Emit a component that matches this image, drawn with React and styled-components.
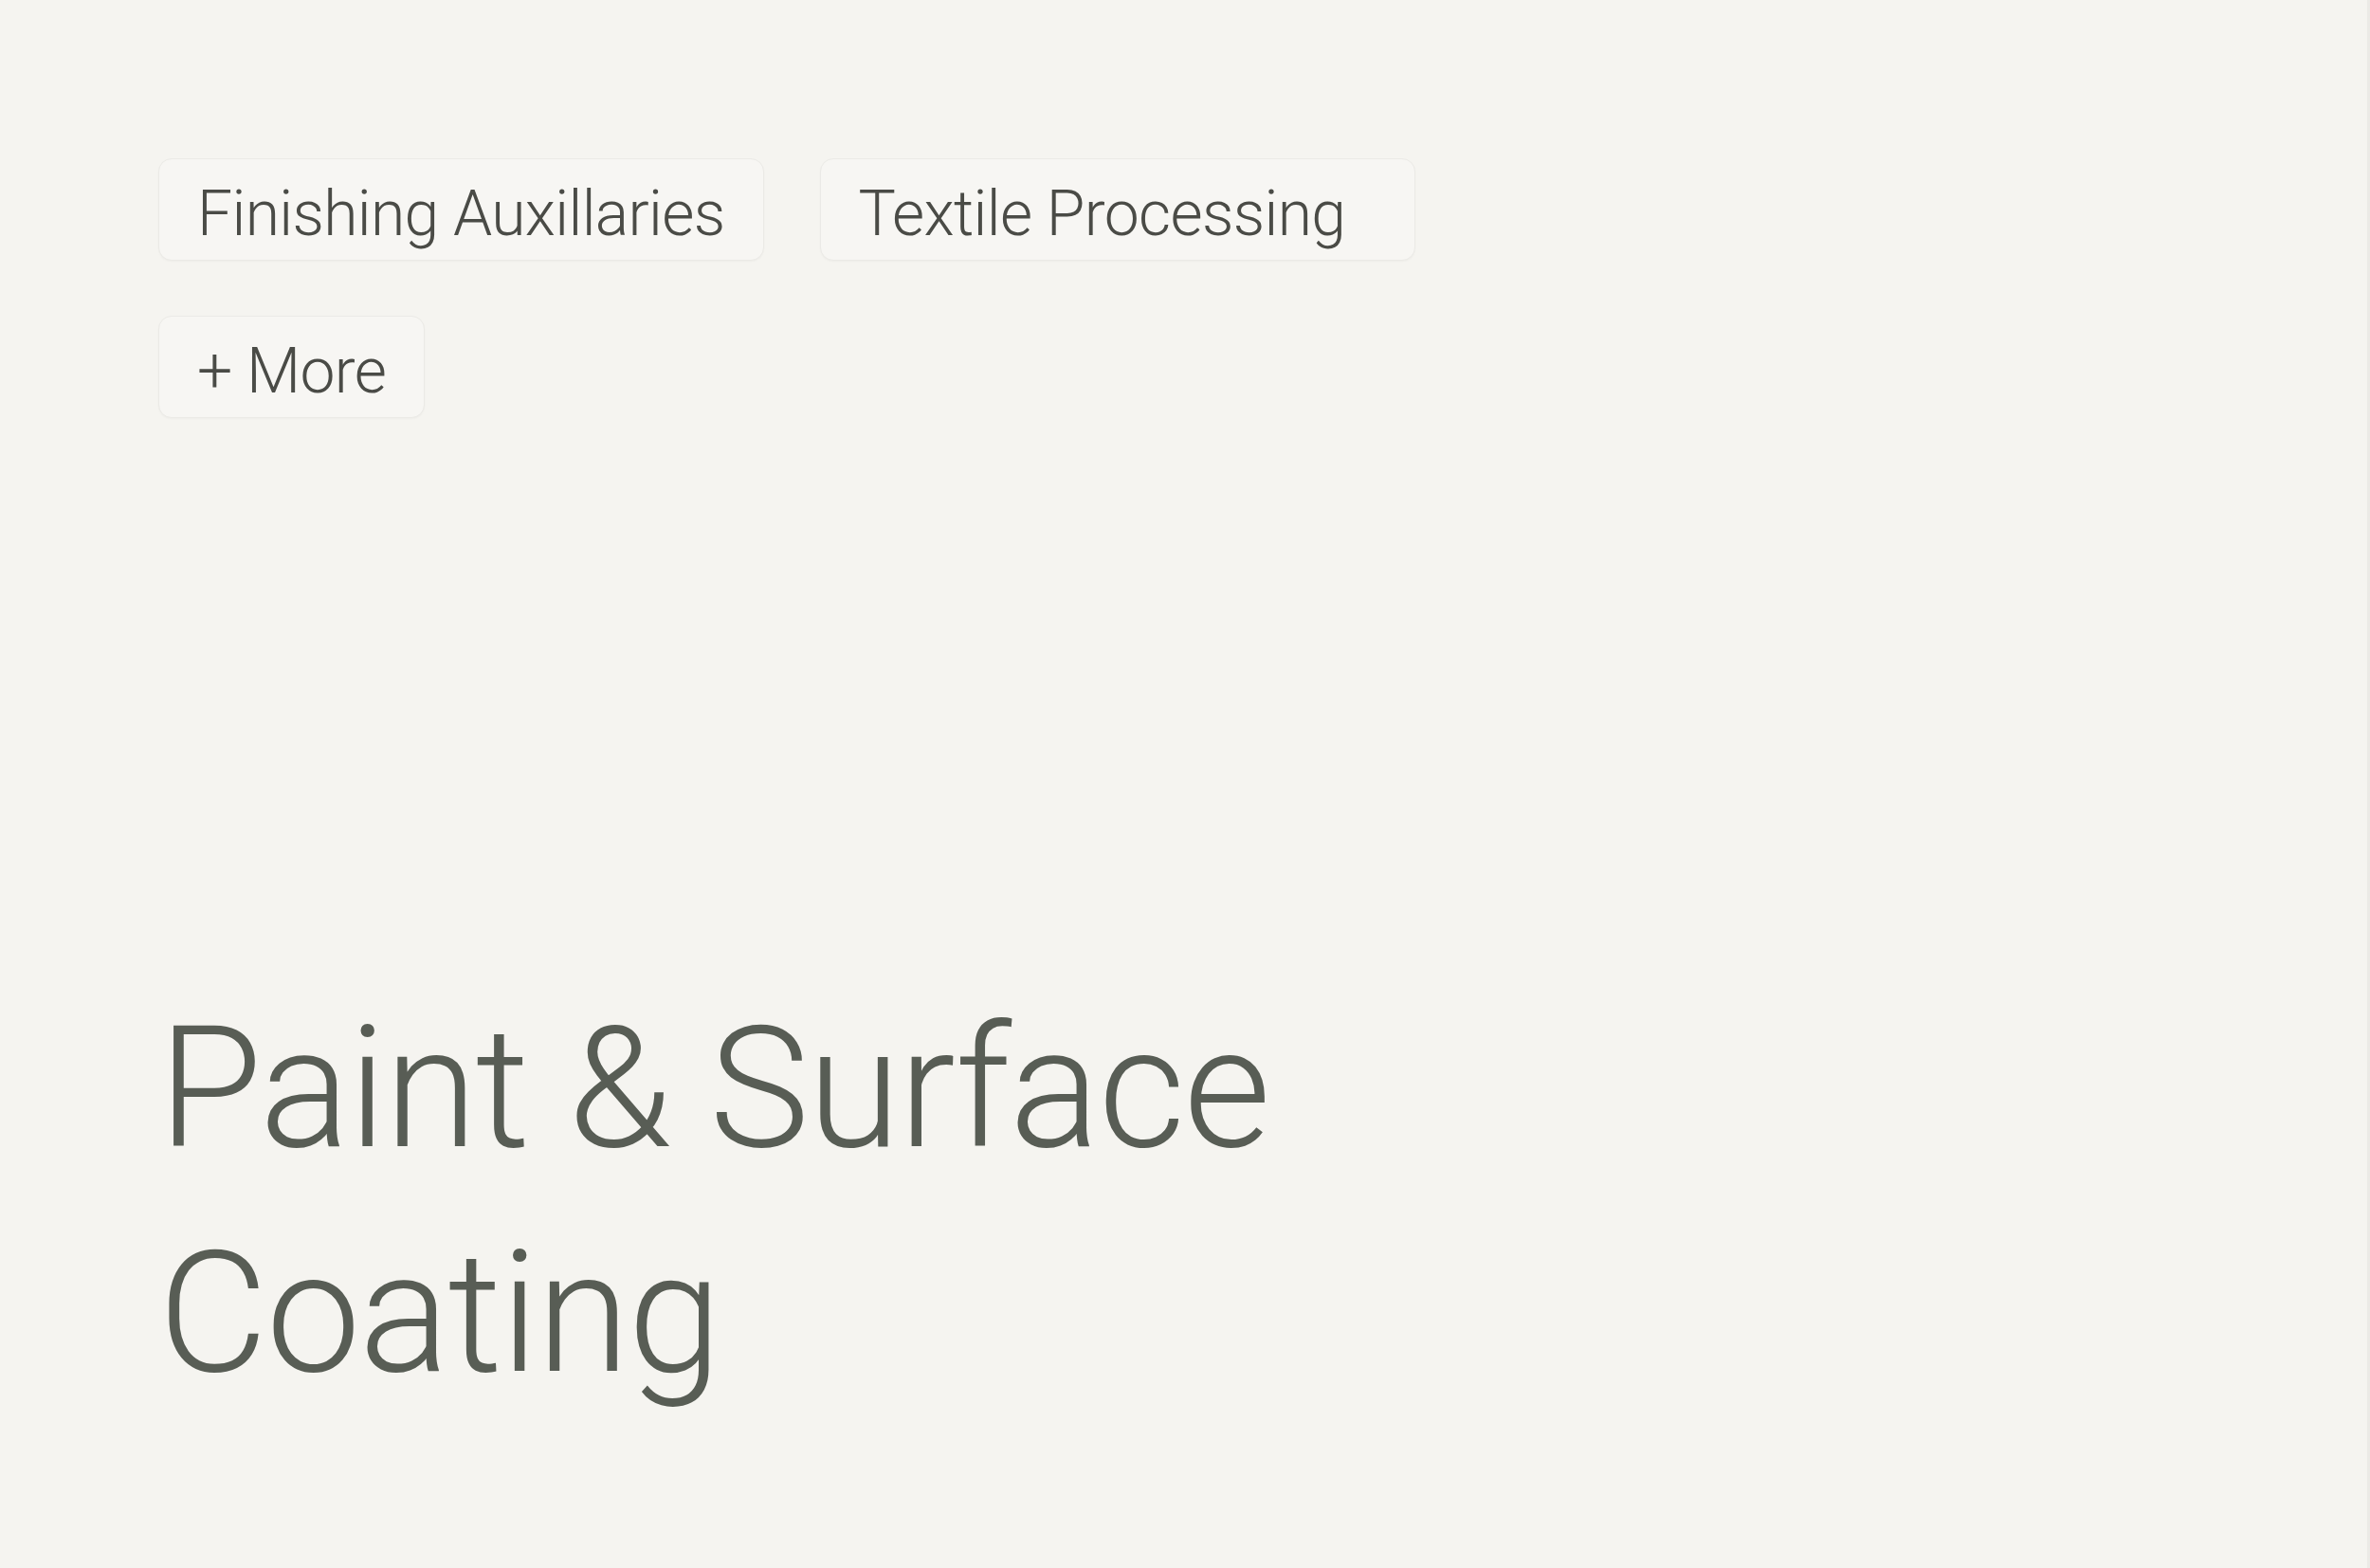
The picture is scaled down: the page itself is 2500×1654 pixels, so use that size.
import React from "react";
import styled, { createGlobalStyle } from "styled-components";

const GlobalStyle = createGlobalStyle`
  html, body {
    margin: 0;
    padding: 0;
    background: #f5f4f0;
    overflow: hidden;
  }
  body {
    font-family: Roboto, "Liberation Sans", sans-serif;
  }
`;

const tags = [
  { label: "Finishing Auxillaries", padRight: 40 },
  { label: "Textile Processing", padRight: 73 },
  { label: "+ More", padRight: 40 },
];

export default function App() {
  return (
    <>
      <GlobalStyle />
      <Page>
        <TagList>
          {tags.map((tag) => (
            <Tag key={tag.label} $padRight={tag.padRight}>
              {tag.label}
            </Tag>
          ))}
        </TagList>
        <Title>
          Paint &amp; Surface
          <br />
          Coating
        </Title>
      </Page>
    </>
  );
}

const Page = styled.div`
  height: 100vh;
  box-sizing: border-box;
  padding: 167px 0 0 167px;
  background: #f5f4f0;
  border-right: 3px solid #ebeae6;
`;

const TagList = styled.div`
  display: flex;
  flex-wrap: wrap;
  gap: 58px 59px;
  max-width: 1450px;
`;

const Tag = styled.div`
  box-sizing: border-box;
  height: 108px;
  padding: 18px ${(p) => p.$padRight}px 9px 40px;
  border: 1.5px solid #ebeae6;
  border-radius: 14px;
  background: #f7f6f3;
  box-shadow: 0 1px 2px rgba(0, 0, 0, 0.03);
  color: #4a4b46;
  font-family: Roboto, "Liberation Sans", sans-serif;
  font-weight: 300;
  font-size: 66px;
  line-height: 79px;
  letter-spacing: -0.01em;
  white-space: nowrap;
`;

const Title = styled.h1`
  margin: 589px 0 0;
  color: #585d55;
  font-family: Roboto, "Liberation Sans", sans-serif;
  font-weight: 300;
  font-size: 178px;
  line-height: 237px;
  letter-spacing: -0.01em;
`;
